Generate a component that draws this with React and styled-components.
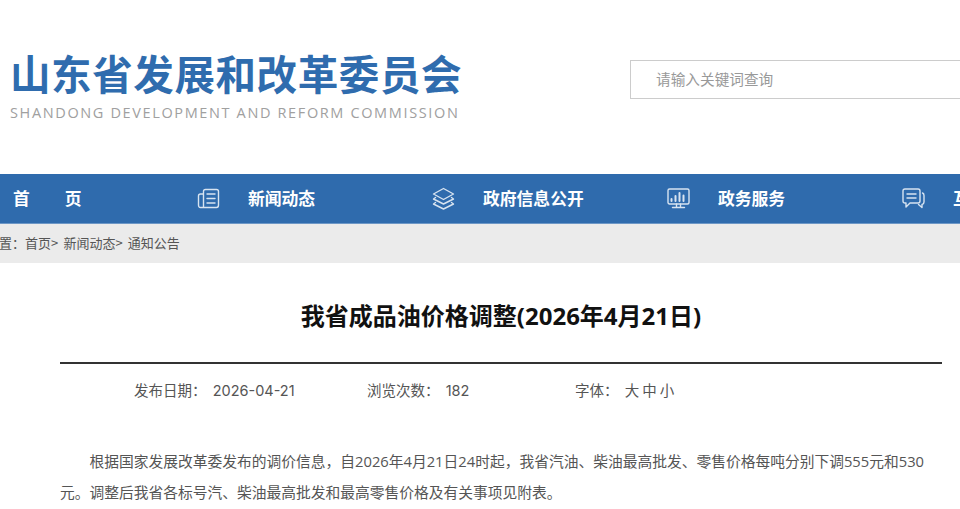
import styled, { createGlobalStyle } from "styled-components";

const GlobalStyle = createGlobalStyle`
  html, body {
    margin: 0;
    padding: 0;
    background: #fff;
  }
  body {
    width: 960px;
    height: 509px;
    overflow: hidden;
    font-family: "Noto Sans CJK SC", "Liberation Sans", sans-serif;
  }
`;

const Page = styled.div`
  width: 960px;
  height: 509px;
  overflow: hidden;
`;

const Header = styled.header`
  display: flex;
  justify-content: space-between;
  align-items: flex-start;
  height: 174px;
  overflow: hidden;
`;

const Logo = styled.div`
  padding: 47px 0 0 10px;
  white-space: nowrap;
`;

const LogoName = styled.div`
  font-size: 40.5px;
  line-height: 52px;
  font-weight: 700;
  letter-spacing: 0.6px;
  color: #2f6cae;
`;

const LogoEnglish = styled.div`
  margin-top: 4px;
  font-family: "Open Sans", "Liberation Sans", sans-serif;
  font-size: 14.5px;
  line-height: 20px;
  font-weight: 500;
  letter-spacing: 1.63px;
  color: #a0a0a0;
`;

const SearchBox = styled.div`
  flex: 0 0 auto;
  box-sizing: border-box;
  width: 400px;
  height: 39px;
  margin: 60px -70px 0 0;
  padding-left: 25px;
  border: 1px solid #cccccc;
  font-size: 14.67px;
  line-height: 35px;
  color: #999;
`;

const Nav = styled.nav`
  display: flex;
  height: 49px;
  background: #2f6bad;
  border-bottom: 1px solid #6d97c6;
  overflow: hidden;
`;

const HomeItem = styled.div`
  flex: 0 0 197px;
  box-sizing: border-box;
  padding-left: 13px;
  font-size: 16.8px;
  font-weight: 700;
  line-height: 48px;
  letter-spacing: 35px;
  color: #fff;
`;

const NavItem = styled.div`
  flex: 0 0 235px;
  display: flex;
  align-items: center;
  gap: 28px;
  font-size: 16.8px;
  font-weight: 700;
  color: #fff;
  white-space: nowrap;
  padding-bottom: 1px;
`;

const NavIcon = styled.svg`
  flex: 0 0 auto;
  width: 23px;
  height: 23px;
  fill: none;
  stroke: #d8e4f1;
  stroke-width: 1.4;
  stroke-linecap: round;
  stroke-linejoin: round;
`;

const Crumbs = styled.div`
  height: 39px;
  background: #ebebeb;
  font-size: 13px;
  line-height: 38px;
  word-spacing: 2.3px;
  color: #555;
  text-indent: -40px;
  white-space: nowrap;
  overflow: hidden;
`;

const Article = styled.main`
  padding: 0 18px 0 60px;
`;

const Title = styled.h1`
  margin: 0;
  padding: 34px 0 27px;
  border-bottom: 2px solid #333;
  font-family: "Open Sans", "Noto Sans CJK SC", sans-serif;
  font-size: 24px;
  line-height: 38px;
  font-weight: 700;
  text-align: center;
  color: #111;
`;

const Meta = styled.div`
  display: flex;
  padding: 16px 0 0 74px;
  font-family: "Inter", "Noto Sans CJK SC", sans-serif;
  font-size: 14.5px;
  line-height: 22px;
  word-spacing: -1px;
  color: #555;
`;

const MetaItem = styled.span`
  flex: 0 0 ${(p) => p.$width}px;
  white-space: pre;
`;

const Body = styled.p`
  margin: 44px 0 0;
  font-family: "Open Sans", "Noto Sans CJK SC", sans-serif;
  font-size: 14.76px;
  line-height: 31px;
  text-indent: 2em;
  color: #555;
`;

const IconNews = () => (
  <NavIcon viewBox="0 0 23 23">
    <path d="M6.5 4.5 Q6.5 2.5 8.5 2.5 H19.5 Q21.5 2.5 21.5 4.5 V18 Q21.5 20.5 19.5 20.5 H3.5 Q1.5 20.5 1.5 18 V9 Q1.5 7 3.5 7 H6.5 M6.5 4.5 V20.5" />
    <path d="M10 7 H18 M10 11.5 H18 M10 16 H18" />
  </NavIcon>
);

const IconLayers = () => (
  <NavIcon viewBox="0 0 23 23">
    <path d="M11.5 1.5 L21.5 7 L11.5 12.5 L1.5 7 Z" />
    <path d="M3.5 10.5 L1.5 12 L11.5 17 L21.5 12 L19.5 10.5" />
    <path d="M3.5 15.5 L1.5 17 L11.5 22 L21.5 17 L19.5 15.5" />
  </NavIcon>
);

const IconScreen = () => (
  <NavIcon viewBox="0 0 23 23">
    <rect x="1" y="2" width="21" height="15" rx="1.5" />
    <path d="M4.5 14 V12 M8.5 14 V9 M12.5 14 V6 M16.5 14 V8.5" strokeWidth="2" />
    <path d="M9.5 17 V19.5 M13.5 17 V19.5 M5.5 20.5 H17.5" />
  </NavIcon>
);

const IconChat = () => (
  <NavIcon viewBox="0 0 23 23">
    <path d="M3 2 H16 Q18 2 18 4 V14 Q18 16 16 16 H8 L4 20 V16 H3 Q1 16 1 14 V4 Q1 2 3 2 Z" />
    <path d="M5 7 H14 M5 11 H14" />
    <path d="M20.5 6 Q22 6.5 22 8.5 V15 Q22 17 20 17.5 V20.5 L16.5 17.5" />
  </NavIcon>
);

const App = () => {
  return (
    <Page>
      <GlobalStyle />
      <Header>
        <Logo>
          <LogoName>山东省发展和改革委员会</LogoName>
          <LogoEnglish>SHANDONG DEVELOPMENT AND REFORM COMMISSION</LogoEnglish>
        </Logo>
        <SearchBox>请输入关键词查询</SearchBox>
      </Header>

      <Nav>
        <HomeItem>首页</HomeItem>
        <NavItem>
          <IconNews />
          新闻动态
        </NavItem>
        <NavItem>
          <IconLayers />
          政府信息公开
        </NavItem>
        <NavItem>
          <IconScreen />
          政务服务
        </NavItem>
        <NavItem>
          <IconChat />
          互动交流
        </NavItem>
      </Nav>

      <Crumbs>当前位置：首页&gt; 新闻动态&gt; 通知公告</Crumbs>

      <Article>
        <Title>我省成品油价格调整(2026年4月21日)</Title>
        <Meta>
          <MetaItem $width={233}>发布日期：  2026-04-21</MetaItem>
          <MetaItem $width={208}>浏览次数：  182</MetaItem>
          <MetaItem $width={120}>字体：  大 中 小</MetaItem>
        </Meta>
        <Body>
          根据国家发展改革委发布的调价信息，自2026年4月21日24时起，我省汽油、柴油最高批发、零售价格每吨分别下调555元和530元。调整后我省各标号汽、柴油最高批发和最高零售价格及有关事项见附表。
        </Body>
      </Article>
    </Page>
  );
};

export default App;
